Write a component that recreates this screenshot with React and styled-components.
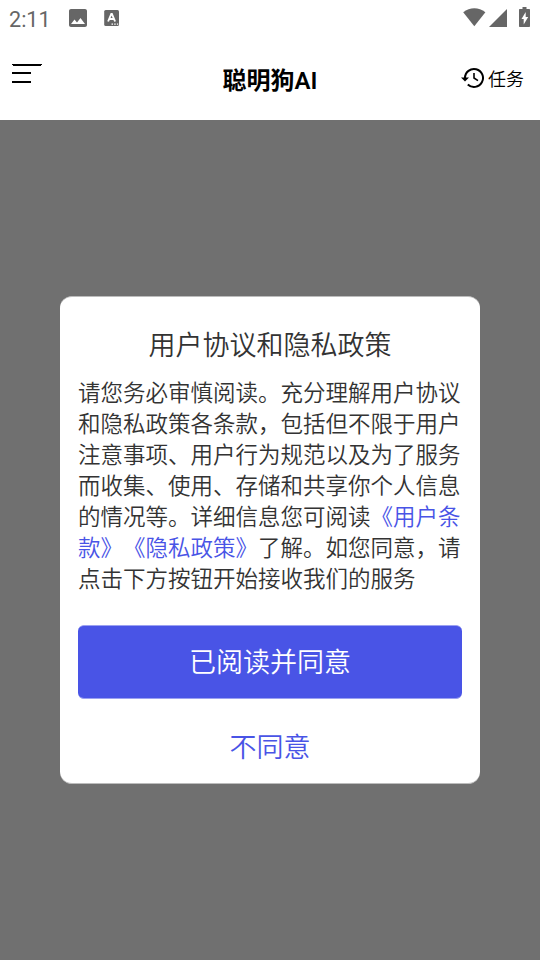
import React from "react";
import styled, { createGlobalStyle } from "styled-components";

const Global = createGlobalStyle`
  * { box-sizing: border-box; }
  body { margin: 0; font-family: Roboto, "Noto Sans CJK SC", sans-serif; background: #fff; text-spacing-trim: space-all; -webkit-font-smoothing: antialiased; }
`;
const Screen = styled.div`
  height: 960px; width: 540px; display: flex; flex-direction: column; overflow: hidden;
`;
const StatusBar = styled.div`
  height: 38px; display: flex; align-items: flex-start; color: #666; padding: 0 9px;
  justify-content: space-between;
`;
const Group = styled.div`display: flex; align-items: flex-start;`;
const Clock = styled.span`font-size: 21.6px; line-height: 39px; width: 60px; font-weight: 400;`;
const Glyph = styled.svg`
  display: block; flex: none; margin: ${p => p.$top}px 0 0 ${p => p.$left || 0}px;
`;
const Header = styled.header`
  height: 82px; display: grid; grid-template-columns: 100px 1fr 100px; padding: 0 12px;
`;
const MenuButton = styled.button`
  border: 0; background: none; padding: 26px 0 0; display: flex; align-items: flex-start;
`;
const Title = styled.h1`
  margin: 0; font-size: 24px; line-height: 87px; font-weight: 600; text-align: center; color: #000;
`;
const Task = styled.div`
  display: flex; align-items: flex-start; justify-content: flex-end; gap: 3px; font-size: 18px; line-height: 26px;
  font-weight: 350; padding: 29px 4px 0 0; color: #000;
`;
const Overlay = styled.main`
  flex: 1; background: #707070; display: flex; align-items: flex-start; justify-content: center; padding-top: 176px;
`;
const Dialog = styled.section`
  width: 420px; height: 488px; border-radius: 12px; background: #fff; padding: 29px 18px 0;
  border: solid #bcbcbc; border-width: 1px 0;
  display: flex; flex-direction: column;
`;
const Heading = styled.h2`
  margin: 0; font-size: 27px; line-height: 40px; font-weight: 350; text-align: center; color: #333;
`;
const Body = styled.p`
  margin: 12px 0 0; font-size: 22.5px; line-height: 31px; font-weight: 350; color: #333; white-space: nowrap;
`;
const Line = styled.span`display: block;`;
const Link = styled.span`color: #4954e6;`;
const Agree = styled.button`
  margin-top: 30px; height: 74px; flex: none; border: solid #9ba1f1; border-width: 1px 0; border-radius: 6px;
  background: #4954e6; color: #fff;
  font: 350 27px/70px Roboto, "Noto Sans CJK SC", sans-serif; padding: 2px 0 0;
`;
const Decline = styled.button`
  margin-top: 14px; height: 70px; flex: none; border: 0; background: none; color: #4954e6;
  font: 350 27px/70px Roboto, "Noto Sans CJK SC", sans-serif; padding: 0;
`;

const PictureIcon = () => (
  <Glyph $top={9} width="18" height="18" viewBox="3 3 18 18" fill="currentColor">
    <path d="M21 19V5c0-1.100-.9-2-2-2H5c-1.100 0-2 .9-2 2v14c0 1.100.9 2 2 2h14c1.100 0 2-.9 2-2zM8.500 13.500l2.500 3.010L14.500 12l4.500 6H5l3.500-4.500z" />
  </Glyph>
);
const KeyboardIcon = () => (
  <Glyph $top={10} $left={17} width="16" height="16" viewBox="0 0 16 16">
    <rect x="0.200" width="14.800" height="16" rx="1.500" fill="currentColor" />
    <path d="M4.100 11.500 7.300 4h.6l3.200 7.500M5.300 9h4.700" fill="none" stroke="#fff" strokeWidth="1.900" />
    <path d="M7.500 14.200h1.500M10.200 14.200h1.500M12.900 14.200h1.300" stroke="#fff" strokeWidth="1.300" />
  </Glyph>
);

export default function App() {
  return (
    <Screen>
      <Global />
      <StatusBar>
        <Group>
          <Clock>2:11</Clock>
          <PictureIcon />
          <KeyboardIcon />
        </Group>
        <Group>
          <Glyph $top={8} width="24" height="19" viewBox="0 0 24 19">
            <path d="M.2 4.300C3.500 1.500 7.500 .2 11.300.2s7.800 1.300 11.100 4.100L11.300 18.300z" fill="currentColor" />
          </Glyph>
          <Glyph $top={9} $left={2} width="19" height="18" viewBox="0 0 19 18">
            <path d="M18 0v18H0z" fill="currentColor" />
          </Glyph>
          <Glyph $top={7} $left={11} width="12" height="20" viewBox="0 0 12 20">
            <path d="M3.500 0h4v2H10c.7 0 1 .4 1 1v16c0 .6-.4 1-1 1H1c-.6 0-1-.4-1-1V3c0-.6.4-1 1-1h2.500z" fill="currentColor" />
            <path d="M6.700 5v5h2.500L4.700 17.500V12H2.500z" fill="#fff" />
          </Glyph>
        </Group>
      </StatusBar>
      <Header>
        <MenuButton aria-label="菜单">
          <svg width="30" height="19" viewBox="0 0 30 19">
            <path d="M0 .5h30M1 1.500h28" stroke="#000" />
            <path d="M0 9h19M0 18h19" stroke="#000" strokeWidth="2" />
          </svg>
        </MenuButton>
        <Title>聪明狗AI</Title>
        <Task>
          <svg width="24" height="22" viewBox="0 0 24 22" fill="none" stroke="#000">
            <path d="M4 11a9 9 0 1 1 2.800 6.500" strokeWidth="2" />
            <path d="M0 10.500h8L4 14.500z" fill="#000" stroke="none" />
            <path d="M13 6v5l4 2.600" strokeWidth="1.600" />
          </svg>
          任务
        </Task>
      </Header>
      <Overlay>
        <Dialog>
          <Heading>用户协议和隐私政策</Heading>
          <Body>
            <Line>请您务必审慎阅读。充分理解用户协议</Line>
            <Line>和隐私政策各条款，包括但不限于用户</Line>
            <Line>注意事项、用户行为规范以及为了服务</Line>
            <Line>而收集、使用、存储和共享你个人信息</Line>
            <Line>的情况等。详细信息您可阅读<Link>《用户条</Link></Line>
            <Line><Link>款》《隐私政策》</Link>了解。如您同意，请</Line>
            <Line>点击下方按钮开始接收我们的服务</Line>
          </Body>
          <Agree>已阅读并同意</Agree>
          <Decline>不同意</Decline>
        </Dialog>
      </Overlay>
    </Screen>
  );
}
